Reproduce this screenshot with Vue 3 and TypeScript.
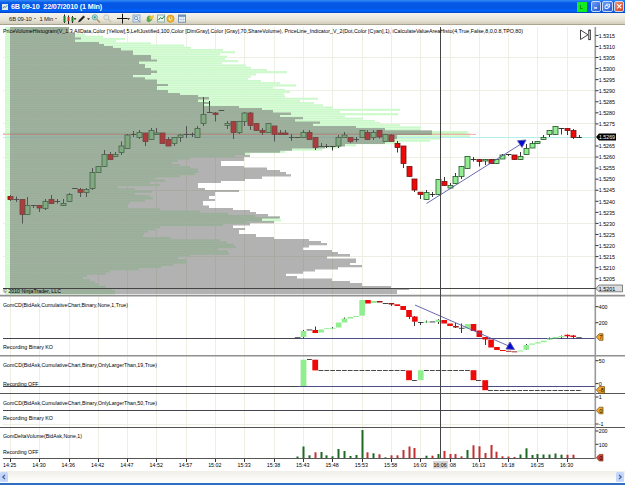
<template>
  <div class="window">
    <header class="titlebar">
      <svg class="app-icon" viewBox="0 0 7 7">
        <rect width="7" height="7" fill="#dcebea" />
        <path d="M1 5L2.5 3L4 4L6 1.5" fill="none" stroke="#397c83" />
      </svg>
      <span class="title">6B 09-10&nbsp; 22/07/2010 (1 Min)</span>
      <span class="link-button">L</span>
      <div class="controls">
        <span class="control">
          <svg viewBox="0 0 10 10"><path d="M2.5 7H6" stroke="#fff" stroke-width="1.6" /></svg>
        </span>
        <span class="control">
          <svg viewBox="0 0 10 10"><path d="M4 4V2.5H7.7V6H6M2.5 4.3H6V7.7H2.5Z" fill="none" stroke="#fff" /></svg>
        </span>
        <span class="control close">
          <svg viewBox="0 0 10 10"><path d="M2.5 2.5L7.5 7.5M7.5 2.5L2.5 7.5" stroke="#fff" stroke-width="1.4" /></svg>
        </span>
      </div>
    </header>

    <nav class="toolbar">
      <span class="tool-label instrument">6B 09-10</span>
      <i class="caret" />
      <span class="tool-label period">1 Min</span>
      <i class="caret" />
      <svg class="tools" width="132" height="12" viewBox="0 0 132 12">
        <!-- chart style -->
        <path d="M4.5 1.5V10M8.5 2.5V11M12.5 3V10" stroke="#222" />
        <path d="M4.5 3V9M12.5 4V8.5" stroke="#16822a" stroke-width="2" />
        <path d="M8.5 4V8" stroke="#c32" stroke-width="2" />
        <path d="M13.5 5.3h3l-1.5 1.6z" fill="#222" />
        <!-- drawing pencil -->
        <path d="M18 9.5L19 7L23.5 2.5L25 4L20.5 8.5Z" fill="#222" />
        <path d="M27 5.3h3l-1.5 1.6z" fill="#222" />
        <!-- zoom in / out -->
        <circle cx="34.8" cy="4.3" r="2.6" fill="#bfe7e2" stroke="#6caeb1" />
        <path d="M33.5 4.3h2.6M34.8 3v2.6" stroke="#21926d" stroke-width=".8" />
        <path d="M36.8 6.3L40 9.5" stroke="#b99760" stroke-width="1.6" />
        <circle cx="46.3" cy="4.3" r="2.5" fill="#e7e7e2" stroke="#c4c4bd" />
        <path d="M48.3 6.3L51 9" stroke="#c4c4bd" stroke-width="1.5" />
        <!-- crosshair -->
        <path d="M57 5.5H67.5M62.5 .8V10.5" stroke="#111" />
        <path d="M67 5.3h3l-1.5 1.6z" fill="#222" />
        <!-- panel zoom -->
        <rect x="73" y="2" width="7" height="7" fill="#dbe9f7" stroke="#8eabcb" />
        <circle cx="76" cy="5" r="1.7" fill="none" stroke="#6e91b5" stroke-width=".8" />
        <path d="M77.2 6.2L80 9" stroke="#8a8e98" />
        <!-- strategies -->
        <path d="M87 4L89 2.5L93 3.5L92 7L89 9.5L86.5 8Z" fill="#59a84f" />
        <path d="M89.5 3.5L94 2L93 6L89.5 6.5Z" fill="#e8c53f" />
        <!-- indicators -->
        <rect x="97.5" y="2" width="7" height="7" fill="#e8f5ed" stroke="#8baeb0" />
        <path d="M98.5 7L100.5 4.5L102 6L104.5 3" fill="none" stroke="#268345" />
        <!-- scheduler -->
        <circle cx="110.5" cy="5.7" r="3.6" fill="#f1b62e" stroke="#cc8e1d" stroke-width=".7" />
        <circle cx="110.5" cy="5.7" r="1.8" fill="#fff3be" />
        <path d="M110.5 4V6H112" fill="none" stroke="#967025" stroke-width=".6" />
        <!-- properties -->
        <rect x="118.5" y="2" width="7" height="7.3" fill="#eff5fb" stroke="#7891b1" />
        <path d="M118.5 3h7" stroke="#507bb4" stroke-width="1.4" />
        <path d="M121 4v5M123.3 4v5M119 6.5h6" stroke="#a4b5c8" stroke-width=".5" />
      </svg>
    </nav>

    <svg class="chart" width="625" height="446" viewBox="0 25 625 446">
      <!-- grid -->
      <g class="grid">
        <path v-for="(t, i) in times" :key="'v' + i" :d="`M${tickX(i)} 27V458`" />
        <path v-for="y in gridRows" :key="'h' + y" :d="`M3 ${y}H595`" />
      </g>

      <!-- value area histogram -->
      <g>
        <g v-for="r in areaRows" :key="r.y">
          <rect x="5" :y="r.y" :width="r.x - 5" height="2.22" fill="#ddfddb" />
          <rect x="5" :y="r.y" :width="r.x - 5" height="1.5" fill="#cbf8ca" />
        </g>
        <path d="M3 133.3H466" stroke="#bfe8b0" />
        <path d="M3 134.4H476" stroke="#f0aaa2" />
      </g>
      <path d="M3 137.5H595" stroke="#b5eeee" />

      <!-- price candles -->
      <g v-for="c in candles" :key="c[0]">
        <path :d="`M${px(c[0])} ${c[3]}V${c[4]}`" class="wick" />
        <path v-if="c[5] === 'd'" :d="`M${barX(c[0]) - 2.8} ${c[1]}h5.6`" class="wick" />
        <rect
          v-else
          :x="px(c[0]) - 2.5"
          :y="c[1]"
          width="5"
          :height="c[2] - c[1]"
          :fill="c[5] === 'g' ? '#90ee90' : '#ee0808'"
          :stroke="c[5] === 'g' ? '#24552a' : '#7a1010'"
          stroke-width=".8"
        />
      </g>

      <!-- volume histogram sits over the candles -->
      <path :d="volumePath" fill="#6d6d6d" fill-opacity=".53" />

      <!-- indicator panels -->
      <g class="zero">
        <path d="M3 338.5H595M3 386.5H595M3 410.5H595" />
        <path d="M3 338.5H298M3 386.5H298M3 410.5H595" class="zero-dark" />
      </g>
      <g v-for="c in delta" :key="'c' + c[0]">
        <path v-if="c[4] > c[3]" :d="`M${px(c[0])} ${c[3]}V${c[4]}`" class="wick" />
        <rect :x="barX(c[0]) - 2.8" :y="c[1]" width="5.6" :height="Math.max(c[2] - c[1], 0.9)" :fill="fills[c[5]]" />
      </g>
      <path d="M307 359.5h5M318.5 370.5H406M412 380.5h6M424 370.5H470M476 380.5h6M488 390.5H582" class="dashes" />
      <rect v-for="(b, i) in blocks" :key="'b' + i" :x="barX(b[0]) - 2.9" :y="b[1]" width="5.8" :height="b[2] - b[1]" :fill="fills[b[3]]" />
      <rect
        v-for="v in volumes"
        :key="'d' + v[0]"
        :x="px(v[0]) - 1"
        :y="458 - v[1]"
        width="2"
        :height="v[1]"
        :fill="v[2] === 'g' ? '#1b6b21' : '#c23030'"
      />

      <!-- trend arrows -->
      <g class="trend">
        <path d="M426.5 203.5L521 144M415 305L511 347" />
        <path d="M517.5 140.8L526 140L522 147.5ZM506 349L510 342L514.5 349.5Z" fill="#0808d0" stroke="none" />
      </g>

      <!-- panel borders and axes -->
      <path d="M0 295.6H630M0 355.7H630" stroke="#909090" stroke-width="1.6" />
      <path d="M0 393.5H630M0 427.5H630M3 458.5H595" stroke="#555" />
      <path d="M595.3 27V459" stroke="#999" stroke-width="1.6" />
      <path d="M3 288.5H597M440.5 27V458" stroke="#444" />

      <g class="caption">
        <text x="3" y="33" textLength="520" lengthAdjust="spacingAndGlyphs">PriceVolumeHistogram(V_1.3,AllData,Color  [Yellow],5,LeftJustified,100,Color [DimGray],Color [Gray],70,ShareVolume),  PriceLine_Indicator_V_2(Dot,Color [Cyan],1),  iCalculateValueAreaHisto(4,True,False,8,0,0.8,TPO,80)</text>
        <text x="3" y="293.3" textLength="58" lengthAdjust="spacingAndGlyphs">© 2010 NinjaTrader, LLC</text>
        <text v-for="n in captions" :key="n.y" x="3" :y="n.y" :textLength="n.w" lengthAdjust="spacingAndGlyphs">{{ n.text }}</text>
      </g>
      <path d="M580.5 30V39.5L588 34.8Z" fill="#fff" stroke="#444" />
      <rect x="588.7" y="30" width="1.8" height="9.7" fill="#ccc" stroke="#333" stroke-width=".8" />

      <!-- price axis -->
      <g class="axis">
        <g v-for="p in priceLabels" :key="p.text">
          <path :d="`M595.5 ${p.y}h3`" />
          <text x="598.7" :y="p.y + 2.2" textLength="16.3" lengthAdjust="spacingAndGlyphs">{{ p.text }}</text>
        </g>
        <g v-for="s in scaleLabels" :key="'s' + s.y">
          <path :d="`M595.5 ${s.y}h3`" />
          <text x="598.8" :y="s.y + 2.2" :textLength="s.w" lengthAdjust="spacingAndGlyphs">{{ s.text }}</text>
        </g>
        <g v-for="(t, i) in times" :key="'t' + i">
          <path :d="`M${tickX(i)} 459v3`" />
          <text v-if="t !== '16:08'" :x="barX(i * 5) - 7.4" y="467.4" textLength="13.3" lengthAdjust="spacingAndGlyphs">{{ t }}</text>
        </g>
      </g>
      <!-- the cursor time covers the hour of the 16:08 label -->
      <rect x="433" y="461" width="15" height="7.5" fill="#d6d6d6" />
      <text x="433.4" y="467.4" class="small" textLength="13.3" lengthAdjust="spacingAndGlyphs">16:06</text>
      <text x="448.4" y="467.4" class="small" textLength="7.6" lengthAdjust="spacingAndGlyphs">:08</text>

      <!-- price markers -->
      <path d="M596 137L599 133.5H616V140.5H599Z" fill="#000" />
      <text x="599" y="139.3" class="small" fill="#fff" textLength="16" lengthAdjust="spacingAndGlyphs">1.5269</text>
      <path d="M596 288.5L599 285H622.5V291.8H599Z" fill="#ddd" stroke="#555" stroke-width=".7" />
      <text x="598.8" y="290.7" class="small" textLength="16.3" lengthAdjust="spacingAndGlyphs">1.5201</text>
      <g v-for="m in markers" :key="'m' + m.y">
        <path :d="`M596.3 ${m.y}L599.3 ${m.y - 3.3}H${m.x}V${m.y + 3.3}H599.3Z`" :fill="m.fill" stroke="#684610" stroke-width=".7" />
        <text :x="(m.x + 598.4) / 2" :y="m.y + 2.1" class="marker" text-anchor="middle">{{ m.text }}</text>
      </g>
    </svg>

    <footer class="scrollbar">
      <span class="scroll-button"><svg viewBox="0 0 7 10"><path d="M4.5 2.8L2.3 5L4.5 7.2" /></svg></span>
      <span class="scroll-button"><svg viewBox="0 0 7 10"><path d="M2.5 2.8L4.7 5L2.5 7.2" /></svg></span>
    </footer>
  </div>
</template>

<script setup lang="ts">
type Tone = 'g' | 'r' | 'd' | 'k'
// bar index, body top, body bottom, high, low, tone
type Candle = [number, number, number, number, number, Tone]
type Step = [number, number]

const fills: Record<Tone, string> = { g: '#90ee90', r: '#ee0808', d: '#333', k: '#981818' }

const times = [
  '14:25', '14:30', '14:36', '14:42', '14:47', '14:52', '14:57', '15:02', '15:33', '15:38',
  '15:43', '15:48', '15:53', '15:58', '16:03', '16:08', '16:13', '16:18', '16:25', '16:30',
]
const gridRows = [57.5, 90.5, 123.5, 157.5, 190.5, 223.5, 256.5, 424.5]

const barX = (i: number) => 10.4 + i * 5.862
const px = (i: number) => Math.floor(barX(i)) + 0.5
const tickX = (i: number) => px(i * 5)

const candles: Candle[] = [
  [0, 196.5, 199.5, 195, 201, 'r'], [1, 199.5, 0, 196.5, 202, 'd'], [2, 199.5, 214.5, 199, 223.5, 'r'],
  [3, 205.5, 214.5, 197, 215, 'g'], [4, 205.5, 0, 205, 208, 'd'], [5, 205.5, 208, 205, 212, 'r'],
  [6, 201.5, 208.5, 199, 210, 'g'], [7, 199.5, 203.5, 195, 204, 'r'], [8, 201.5, 0, 199, 203.5, 'd'],
  [9, 203.5, 205.5, 199, 206, 'g'], [10, 194.5, 201.5, 193, 202, 'g'], [11, 188.5, 0, 188, 189, 'd'],
  [12, 189.5, 192.5, 188, 197, 'r'], [13, 189.5, 192.5, 188, 197, 'g'], [14, 172.5, 188.5, 168, 190, 'g'],
  [15, 166.5, 172.5, 166, 173, 'g'], [16, 154.5, 166.5, 150, 167, 'g'], [17, 154.5, 159.5, 152, 160, 'r'],
  [18, 154.5, 156.5, 152, 157, 'g'], [19, 146, 152.5, 141.5, 155, 'g'], [20, 135, 148.5, 134, 149, 'g'],
  [21, 134.5, 0, 131, 137, 'd'], [22, 132.5, 137.5, 130, 139, 'g'], [23, 133, 141.5, 133, 146, 'r'],
  [24, 130.5, 139.5, 128, 140, 'g'], [25, 133, 134.5, 128, 135, 'g'], [26, 133, 143.5, 133, 144, 'r'],
  [27, 139.5, 146, 137, 146, 'r'], [28, 137.5, 143.5, 137, 146, 'g'], [29, 135, 137.5, 134, 142, 'g'],
  [30, 134.5, 0, 126, 138, 'd'], [31, 134.5, 0, 132.5, 137, 'd'], [32, 128.5, 137.5, 126, 138, 'g'],
  [33, 114.5, 123.5, 97, 126, 'g'], [34, 112.5, 0, 101, 113, 'd'], [35, 113, 114.5, 112, 121.5, 'r'],
  [36, 110.5, 0, 110, 111, 'd'], [37, 123.5, 125.5, 121, 129, 'g'], [38, 121.5, 132.5, 121, 139, 'r'],
  [39, 121.5, 132.5, 121, 134, 'g'], [40, 113, 121.5, 112, 126, 'g'], [41, 113, 125.5, 112, 130, 'r'],
  [42, 123.5, 130.5, 123, 131, 'r'], [43, 130.5, 132.5, 128, 135, 'r'], [44, 123.5, 132.5, 123, 133, 'g'],
  [45, 126, 134.5, 126, 141.5, 'r'], [46, 133, 134.5, 130, 135, 'r'], [47, 133, 134.5, 130, 135, 'r'],
  [48, 137.5, 0, 134, 141, 'd'], [49, 137.5, 0, 137, 138, 'd'], [50, 132.5, 137.5, 130, 138, 'g'],
  [51, 132.5, 139.5, 130, 140, 'r'], [52, 137.5, 147.5, 137, 150, 'r'], [53, 146.5, 0, 143, 147, 'd'],
  [54, 146.5, 0, 144, 148, 'd'], [55, 146.5, 0, 146, 150.5, 'd'], [56, 137.5, 146, 135, 148, 'g'],
  [57, 135, 137.5, 132, 138, 'g'], [58, 137.5, 141.5, 137, 143, 'r'], [59, 139.5, 0, 137, 142, 'd'],
  [60, 130.5, 137.5, 130, 138, 'g'], [61, 132.5, 139.5, 130, 140, 'r'], [62, 132.5, 137.5, 130, 140, 'g'],
  [63, 130.5, 137, 130, 138.5, 'r'], [64, 134.5, 141.5, 134, 142, 'g'], [65, 135, 141.5, 134, 142, 'r'],
  [66, 143.5, 147.5, 141, 152.5, 'r'], [67, 146, 163.5, 146, 168, 'r'], [68, 166.5, 176.5, 166, 177, 'r'],
  [69, 179, 190, 179, 192, 'r'], [70, 192.2, 194.5, 192, 199, 'r'], [71, 192.5, 199.5, 190, 200, 'g'],
  [72, 194.5, 0, 192, 197, 'd'], [73, 179.5, 194.5, 179, 195, 'g'], [74, 181.5, 185.5, 177, 186, 'r'],
  [75, 185.5, 188, 183, 189, 'g'], [76, 176.5, 183.5, 173, 184, 'g'], [77, 166.5, 176.5, 166, 179, 'g'],
  [78, 156.5, 168.5, 156, 169, 'g'], [79, 159.5, 0, 157, 161.5, 'd'], [80, 159.5, 161.5, 159, 166.5, 'r'],
  [81, 159.5, 161, 159, 165, 'g'], [82, 159.5, 163.5, 159, 164, 'r'], [83, 159.5, 163.5, 159, 164, 'g'],
  [84, 155, 159, 154, 159, 'g'], [85, 154.5, 0, 154, 156, 'd'], [86, 155, 159.5, 155, 160, 'r'],
  [87, 156.5, 159.5, 152, 160, 'g'], [88, 148.5, 154.5, 144, 155, 'g'], [89, 143.5, 148, 141, 148, 'g'],
  [90, 141.5, 143.5, 141, 144, 'g'], [91, 137.5, 139.5, 135, 140, 'g'], [92, 130.5, 134.5, 130, 137, 'g'],
  [93, 126.5, 134.5, 126, 135, 'g'], [94, 128.5, 0, 128, 134.5, 'd'], [95, 128.5, 130.5, 128, 135, 'r'],
  [96, 130.5, 137.5, 129, 139, 'r'], [97, 137.5, 0, 135, 138, 'd'],
]

// cumulative delta
const delta: Candle[] = [
  [49, 337.3, 338, 0, 0, 'd'], [50, 331, 337, 330, 338, 'g'], [51, 329.5, 330.2, 0, 0, 'd'],
  [52, 330, 333, 326.5, 333, 'r'], [53, 329.5, 332.5, 0, 0, 'g'], [54, 328.2, 329, 0, 0, 'g'],
  [55, 327.8, 328.5, 327, 329, 'g'], [56, 322.5, 327.5, 0, 0, 'g'], [57, 318.5, 322.5, 317.5, 322, 'g'],
  [58, 317, 318.5, 0, 0, 'g'], [59, 316, 317, 0, 0, 'g'], [60, 300, 315.7, 0, 0, 'g'],
  [61, 300, 303.5, 0, 0, 'r'], [62, 301, 303, 0, 0, 'g'], [63, 301, 302.5, 0, 0, 'k'],
  [64, 303, 303.7, 0, 0, 'd'], [65, 303, 304.5, 303, 306, 'k'], [66, 304.3, 306, 0, 0, 'r'],
  [67, 306, 310, 0, 0, 'r'], [68, 310, 317, 310, 319, 'r'], [69, 316.5, 321.7, 316, 326, 'r'],
  [70, 322, 322.8, 322, 325, 'd'], [71, 321.5, 322.3, 320.5, 323, 'g'], [72, 321.5, 322.2, 0, 0, 'd'],
  [73, 319.7, 322, 319, 324, 'g'], [74, 320, 323.5, 0, 0, 'r'], [75, 323.5, 326, 0, 0, 'r'],
  [76, 326, 327.5, 323, 328, 'k'], [77, 327.8, 328.6, 323.5, 333, 'd'], [78, 324, 328.5, 0, 0, 'g'],
  [79, 324, 331, 0, 0, 'r'], [80, 330.5, 337, 0, 0, 'r'], [81, 337, 339.5, 337, 345, 'r'],
  [82, 339.5, 347.5, 0, 0, 'r'], [83, 347, 350, 0, 0, 'r'], [84, 350, 351, 0, 0, 'r'],
  [85, 350.8, 351.6, 0, 0, 'k'], [86, 351.4, 352.3, 0, 0, 'k'], [87, 350.5, 351.5, 0, 0, 'g'],
  [88, 345, 349.7, 344, 350, 'g'], [89, 343.5, 344.7, 0, 0, 'g'], [90, 342.2, 343.5, 0, 0, 'g'],
  [91, 340.7, 342.2, 0, 0, 'g'], [92, 338.5, 339.8, 337.5, 340, 'g'], [93, 337, 338.3, 0, 0, 'g'],
  [94, 336, 337.3, 335.5, 339, 'g'], [95, 334.8, 336.3, 334.5, 338, 'r'], [96, 335.5, 337, 335, 338.5, 'r'],
  [97, 337.3, 338.2, 0, 0, 'd'],
]
const blocks: [number, number, number, Tone][] = [
  [50, 359.7, 386, 'g'], [52, 359.7, 370.4, 'r'], [68, 370.4, 380.2, 'r'],
  [70, 370.2, 380, 'g'], [79, 370.2, 380.2, 'r'], [81, 380.2, 390.2, 'r'],
]
const volumes: [number, number, Tone][] = [
  [49, 1.5, 'g'], [50, 11.5, 'g'], [51, 2.7, 'g'], [52, 5.7, 'r'], [53, 6, 'g'], [54, 2.7, 'g'], [55, 1.7, 'g'],
  [56, 9, 'g'], [57, 7, 'g'], [58, 2, 'g'], [59, 3, 'g'], [60, 28, 'g'], [61, 5.7, 'r'], [62, 4.7, 'g'],
  [63, 3.7, 'r'], [64, 0.7, 'g'], [65, 2.7, 'r'], [66, 2.7, 'r'], [67, 8, 'r'], [68, 11.5, 'r'], [69, 10, 'r'],
  [71, 2.3, 'g'], [72, 2.3, 'r'], [73, 4, 'g'], [74, 7, 'r'], [75, 4, 'r'], [76, 4, 'r'], [77, 1.7, 'r'],
  [78, 8, 'g'], [79, 12.7, 'r'], [80, 11.7, 'r'], [81, 5, 'r'], [82, 13, 'r'], [83, 6.3, 'r'], [84, 1.7, 'r'],
  [85, 1.5, 'r'], [86, 1, 'r'], [87, 3.5, 'g'], [88, 9.7, 'g'], [89, 3, 'g'], [90, 4, 'g'], [91, 3.5, 'g'],
  [92, 3.5, 'g'], [93, 4.5, 'g'], [94, 3.3, 'g'], [95, 3.3, 'r'], [96, 3.3, 'r'],
]

// start y and right edge of each run of rows
const volumeSteps: Step[] = [
  [27, 69], [33, 75], [37.5, 81], [39.5, 75], [42, 99], [44, 104], [46, 113], [48, 121], [50.5, 133], [55, 151],
  [59.5, 157], [61.5, 139], [64, 145], [68, 151], [70.5, 157], [73, 151], [75, 133], [77.3, 145], [79.5, 157],
  [84, 168], [86, 157], [90, 168], [93, 180], [95, 198], [97, 209], [99.5, 198], [102, 209], [104, 204],
  [106, 239], [108, 262], [110, 273], [112.5, 291], [115, 280], [117, 303], [119.3, 295], [121.5, 320],
  [123.7, 313], [126, 356], [128, 385], [130.3, 432], [135, 397], [139, 394], [142, 385], [144, 345],
  [146.5, 325], [148.5, 292], [150.7, 280], [152.7, 245], [155, 250], [157, 244], [161, 221], [166, 244],
  [167.5, 267], [170, 280], [172, 286], [174.3, 291], [176.5, 262], [179, 245], [181, 221], [183, 198],
  [188, 205], [190, 239], [192, 215], [196, 209], [199, 215], [201, 203], [205.5, 209], [208, 233],
  [210, 250], [212, 256], [214, 268], [216.3, 280], [218.5, 262], [221, 274], [223.3, 250], [225.5, 233],
  [228, 245], [230, 239], [234, 256], [237, 274], [239, 309], [241, 321], [243, 327], [245.3, 309],
  [247.5, 303], [250, 332], [252, 338], [254, 350], [256.5, 327], [258.5, 356], [263, 350], [265, 362],
  [267.3, 338], [269.5, 315], [271.5, 303], [273.7, 286], [276, 297], [278.5, 332], [281, 350],
  [283, 362], [286, 391], [288, 409], [290, 397],
]
const areaSteps: Step[] = [
  [27, 69], [33, 85], [35, 103], [37, 96], [38.5, 125], [40.5, 116], [42.5, 151], [44.5, 184], [47, 191],
  [49, 223], [51.5, 235], [54, 220], [56, 227], [58, 225], [60.5, 238], [63, 222], [65, 246], [67, 251],
  [69, 267], [71.3, 287], [73.5, 256], [76, 251], [78, 248], [80, 261], [82.5, 280], [85, 296], [87, 273],
  [89, 285], [91, 290], [93.5, 284], [96, 285], [98, 318], [100, 300], [102, 314], [104, 323], [107, 333],
  [109, 400], [111, 340], [113.5, 398], [116, 345], [118, 363], [120, 375], [122, 380], [124, 400],
  [126, 421], [128.5, 421], [130, 456], [132, 468], [134, 470], [136.5, 440], [138.5, 440], [140.7, 430],
  [142.5, 400], [144.5, 356], [147, 340], [149, 322], [151, 285], [153, 250], [155, 235], [157, 190],
  [159, 178], [161.5, 172], [164, 180], [167, 190], [169, 198], [172, 205], [174, 195], [176, 180],
  [178, 155], [180, 165], [182, 150], [184, 160], [186, 118], [188, 135], [190.5, 152], [193, 135],
  [195, 150], [197.5, 153], [200, 145], [202.5, 130], [205, 127], [208, 160], [210.5, 200], [213, 228],
  [215, 255], [217, 279], [219, 281], [221, 246], [223, 223], [225, 192], [227, 160], [229, 155],
  [231, 148], [233, 144], [235.5, 143], [237.5, 171], [239.5, 220], [242, 227], [244.5, 234], [247, 236],
  [249, 218], [251, 228], [253.5, 229], [255.5, 190], [258, 178], [260, 187], [263, 173], [265, 173],
  [267, 161], [269, 139], [271, 110], [273, 106], [275, 87], [277, 83], [279, 90], [281, 95], [283, 99],
  [286, 106], [289, 112], [291, 115],
]

const edgeAt = (steps: Step[], y: number) => steps.filter((s) => s[0] <= y).pop()?.[1] ?? 69

const areaRows = Array.from({ length: 121 }, (_, k) => {
  const y = 27 + k * 2.213
  return { y, x: edgeAt(areaSteps, y + 1) }
})
const volumePath = 'M10 27' + volumeSteps.map(([y, x]) => `V${y}H${x}`).join('') + 'V294H10Z'

// 1.5270 gives way to the last price marker
const priceLabels = Array.from({ length: 23 }, (_, i) => ({
  text: ((15315 - i * 5) / 10000).toFixed(4),
  y: 35.4 + i * 11.06,
})).filter((p) => p.text !== '1.5270')
const scaleLabels = [
  { text: '400', y: 306.7, w: 8.7 },
  { text: '200', y: 322.7, w: 8.7 },
  { text: '50', y: 360.7, w: 5.8 },
  { text: '0', y: 383.6, w: 3 },
  { text: '1', y: 397, w: 3 },
  { text: '-1', y: 424, w: 4.8 },
  { text: '200', y: 431, w: 8.7 },
  { text: '100', y: 444.3, w: 8.7 },
]
const markers = [
  { text: '7', y: 337, x: 603, fill: '#f5a82e' },
  { text: '-8', y: 389.9, x: 604.5, fill: '#f5a82e' },
  { text: '0', y: 410.5, x: 603, fill: '#f5a82e' },
  { text: '0', y: 457.7, x: 603, fill: '#e03c3c' },
]
const captions = [
  { text: 'GomCD(BidAsk,CumulativeChart,Binary,None,1,True)', y: 307, w: 125 },
  { text: 'Recording Binary KO', y: 348.7, w: 50 },
  { text: 'GomCD(BidAsk,CumulativeChart,Binary,OnlyLargerThan,19,True)', y: 367, w: 154 },
  { text: 'Recording OFF', y: 386.3, w: 35.5 },
  { text: 'GomCD(BidAsk,CumulativeChart,Binary,OnlyLargerThan,50,True)', y: 404.5, w: 154 },
  { text: 'Recording Binary KO', y: 420, w: 50 },
  { text: 'GomDeltaVolume(BidAsk,None,1)', y: 438.3, w: 79 },
  { text: 'Recording OFF', y: 453.7, w: 35.5 },
]
</script>

<style>
body {
  margin: 0;
  overflow: hidden;
}
</style>

<style scoped>
.window {
  display: flex;
  flex-direction: column;
  width: 625px;
  height: 485px;
  background: #fff;
  font-family: "Liberation Sans", Arial, sans-serif;
}

.titlebar {
  display: flex;
  align-items: center;
  box-sizing: border-box;
  height: 13px;
  padding: 0 1px 0 2px;
  color: #fff;
  background: linear-gradient(#328cf5 0, #0659e7 22%, #0355e4 60%, #0263fa 85%, #0242bd 100%);
}

.app-icon {
  width: 6px;
  height: 6px;
}

.title {
  flex: 1;
  margin-left: 3px;
  font-size: 7.2px;
  font-weight: bold;
  letter-spacing: -0.13px;
  white-space: nowrap;
}

.link-button {
  width: 10px;
  height: 10px;
  margin-right: 4px;
  font-size: 6px;
  line-height: 10px;
  text-align: center;
  color: #075c07;
  background: #12ed20;
}

.controls {
  display: flex;
  gap: 1px;
}

.control {
  box-sizing: border-box;
  width: 10.5px;
  height: 10.5px;
  border: 0.5px solid #c6d9fa;
  border-radius: 2px;
  background: linear-gradient(135deg, #6e9df2, #2159d2);
}

.control.close {
  background: linear-gradient(135deg, #f19577, #cf3f19);
}

.control svg {
  display: block;
}

.toolbar {
  display: flex;
  align-items: center;
  box-sizing: border-box;
  height: 12px;
  padding-left: 9px;
  background: linear-gradient(#f5f4ee, #e9e6d9 60%, #d2cdbb);
  border-bottom: 1px solid #aaa590;
}

.tool-label {
  font-size: 5.9px;
  white-space: nowrap;
  color: #222;
}

.instrument {
  width: 24.5px;
  letter-spacing: -0.15px;
}

.period {
  width: 15.5px;
  margin-left: 4px;
  letter-spacing: -0.15px;
}

.caret {
  width: 0;
  border: 1.5px solid transparent;
  border-top-color: #222;
  border-bottom: 0;
}

.tools {
  margin-left: 2.5px;
}

.chart {
  display: block;
  flex: none;
}

.grid path {
  stroke: #eeeee2;
}

.wick {
  stroke: #222;
  stroke-width: 0.9;
}

.zero path {
  stroke: #4d4d86;
}

.zero .zero-dark {
  stroke: #44444f;
}

.dashes {
  stroke: #333;
  stroke-dasharray: 4.8 1.06;
  stroke-width: 0.9;
}

.trend path {
  stroke: #5858a8;
  stroke-width: 0.9;
}

.caption text,
.axis text,
.small {
  font-size: 6.1px;
}

.marker {
  font-size: 5.6px;
}

.axis path {
  stroke: #333;
}

.scrollbar {
  display: flex;
  justify-content: space-between;
  flex: 1;
  box-sizing: border-box;
  padding: 1px 1px 0 0;
  background: linear-gradient(#efeee8, #fdfdfa 80%);
  border-bottom: 2px solid #2e6fc4;
}

.scroll-button {
  width: 8px;
  height: 10px;
  border-radius: 1.5px;
  background: #c4d6fb;
}

.scroll-button svg {
  display: block;
  width: 8px;
  height: 10px;
  fill: none;
  stroke: #42608f;
  stroke-width: 1.2;
}
</style>
